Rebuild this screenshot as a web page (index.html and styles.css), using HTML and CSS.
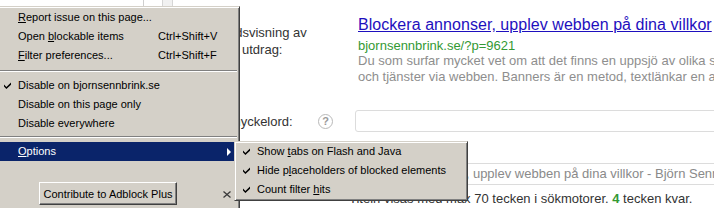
FILE: index.html
```
<!DOCTYPE html>
<html lang="sv">
<head>
<meta charset="utf-8">
<title>Adblock Plus menu</title>
<link rel="stylesheet" href="styles.css">
</head>
<body>
<div class="page">
  <div class="topstrip"><span class="tab-a"></span><span class="tab-b"></span></div>
  <div class="row row-preview">
    <div class="label"><div class="label-text indent-preview">Förhandsvisning av<br>utdrag:</div></div>
    <div class="snippet">
      <a class="snippet-title" href="#">Blockera annonser, upplev webben på dina villkor</a>
      <div class="snippet-url">bjornsennbrink.se/?p=9621</div>
      <div class="snippet-desc">Du som surfar mycket vet om att det finns en uppsjö av olika sajter<br>och tjänster via webben. Banners är en metod, textlänkar en annan</div>
    </div>
  </div>
  <div class="row row-key">
    <div class="label label-flex"><span class="label-text indent-key">Fokusnyckelord:</span><span class="help">?</span></div>
    <div class="field"><div class="input"></div></div>
  </div>
  <div class="row row-title">
    <div class="label label-flex"><span class="label-text">SEO-titel:</span></div>
    <div class="field">
      <div class="input input-text">Blockera annonser, upplev webben på dina villkor - Björn Sennbrink</div>
      <div class="hint">Titeln visas med max 70 tecken i sökmotorer. <b class="count">4</b> tecken kvar.</div>
    </div>
  </div>
</div>

<div class="menu">
  <div class="item"><span class="chk"></span><span><u>R</u>eport issue on this page...</span><span></span></div>
  <div class="item"><span class="chk"></span><span>Open <u>b</u>lockable items</span><span class="key">Ctrl+Shift+V</span></div>
  <div class="item"><span class="chk"></span><span><u>F</u>ilter preferences...</span><span class="key">Ctrl+Shift+F</span></div>
  <div class="sep sep-a"></div>
  <div class="item"><span class="chk"><svg class="tick" viewBox="0 0 7 7" width="7" height="7"><polygon points="0,2.6 2.4,5 7,0.4 7,2.8 2.4,7 0,4.6"/></svg></span><span>Disable on bjornsennbrink.se</span><span></span></div>
  <div class="item"><span class="chk"></span><span>Disable on this page only</span><span></span></div>
  <div class="item"><span class="chk"></span><span>Disable everywhere</span><span></span></div>
  <div class="sep sep-b"></div>
  <div class="item item-active"><span class="chk"></span><span><u>O</u>ptions</span><span class="arrow"></span></div>
  <div class="button-row">
    <button class="btn" type="button">Contribute to Adblock Plus</button>
    <svg class="close" viewBox="0 0 8 7" width="8" height="7"><path d="M0.5,0.5 L7.5,6.5 M7.5,0.5 L0.5,6.5"/></svg>
  </div>
</div>

<div class="submenu">
  <div class="sitem"><span class="schk"><svg class="tick" viewBox="0 0 7 7" width="7" height="7"><polygon points="0,2.6 2.4,5 7,0.4 7,2.8 2.4,7 0,4.6"/></svg></span><span>Show <u>t</u>abs on Flash and Java</span></div>
  <div class="sitem"><span class="schk"><svg class="tick" viewBox="0 0 7 7" width="7" height="7"><polygon points="0,2.6 2.4,5 7,0.4 7,2.8 2.4,7 0,4.6"/></svg></span><span>Hide p<u>l</u>aceholders of blocked elements</span></div>
  <div class="sitem"><span class="schk"><svg class="tick" viewBox="0 0 7 7" width="7" height="7"><polygon points="0,2.6 2.4,5 7,0.4 7,2.8 2.4,7 0,4.6"/></svg></span><span>Count filter <u>h</u>its</span></div>
</div>
</body>
</html>
```

FILE: styles.css
```
html, body {
  margin: 0;
  padding: 0;
}
body {
  width: 714px;
  height: 208px;
  overflow: hidden;
  position: relative;
  background: #ffffff;
  font-family: "Liberation Sans", Arial, sans-serif;
  color: #333;
}

/* ---------- page behind the menu ---------- */
.page {
  font-size: 13px;
}
.topstrip {
  display: flex;
  height: 6px;
}
.tab-a {
  margin-left: 143px;
  width: 18px;
  border-left: 1px solid #cfcfcf;
}
.tab-b {
  width: 9px;
  background: #f1f1f1;
  border-left: 1px solid #d6d6d6;
  border-right: 1px solid #d6d6d6;
}
.row {
  display: flex;
  padding-left: 242px;
}
.label {
  width: 113px;
  flex: none;
  color: #333;
  line-height: 17px;
}
.label-text {
  display: block;
  white-space: nowrap;
}
.indent-preview {
  padding-top: 18px;
  text-indent: -48px;
}
.indent-key {
  margin-left: -44px;
}
.label-flex {
  display: flex;
  align-items: center;
  height: 22px;
}
.help {
  margin-left: auto;
  margin-right: 22px;
  width: 13px;
  height: 13px;
  border: 1px solid #b9b9b9;
  border-radius: 50%;
  color: #9a9a9a;
  font-size: 11px;
  font-weight: bold;
  line-height: 13px;
  text-align: center;
}
.snippet {
  padding-top: 9px;
  padding-left: 3px;
  white-space: nowrap;
}
.snippet-title {
  display: block;
  font-size: 16px;
  letter-spacing: 0.05px;
  line-height: 19px;
  color: #1e0fbe;
  text-decoration: underline;
}
.snippet-url {
  margin-top: 4px;
  line-height: 15px;
  color: #339933;
}
.snippet-desc {
  line-height: 16px;
  color: #8e8e8e;
}
.row-key {
  margin-top: 25px;
}
.row-title {
  margin-top: 31px;
}
.field {
  flex: none;
  width: 430px;
}
.input {
  box-sizing: border-box;
  height: 22px;
  border: 1px solid #dcdcdc;
  border-radius: 3px;
  background: #fff;
}
.input-text {
  padding-left: 2px;
  line-height: 20px;
  color: #8a8a8a;
  white-space: nowrap;
  overflow: hidden;
}
.hint {
  margin-top: 6px;
  margin-left: -6px;
  line-height: 16px;
  color: #333;
  white-space: nowrap;
}
.count {
  color: #339933;
}

/* ---------- classic context menu ---------- */
.menu,
.submenu {
  position: absolute;
  box-sizing: border-box;
  background: #d4d0c8;
  border: 1px solid;
  border-color: #d4d0c8 #404040 #404040 #d4d0c8;
  box-shadow: inset 1px 1px #ffffff, inset -1px -1px #808080;
  font-family: "Liberation Sans", Arial, sans-serif;
  font-size: 11px;
  color: #000;
}
.menu {
  left: -4px;
  top: 6px;
  width: 244px;
  height: 230px;
  padding: 1px 1px;
  z-index: 2;
}
.item {
  display: grid;
  grid-template-columns: 20px 140px 1fr;
  align-items: center;
  height: 19px;
  line-height: 19px;
  white-space: nowrap;
}
.chk {
  display: flex;
  align-items: center;
  padding-left: 6px;
  height: 19px;
}
.tick {
  display: block;
  fill: #000;
}
.key {
  color: #000;
}
.item-active {
  background: #0a246a;
  color: #fff;
}
.arrow {
  justify-self: end;
  margin-right: 7px;
  width: 0;
  height: 0;
  border-left: 4px solid #ffffff;
  border-top: 4px solid transparent;
  border-bottom: 4px solid transparent;
}
.sep {
  height: 0;
  margin-left: 1px;
  margin-right: 1px;
  border-top: 1px solid #808080;
  border-bottom: 1px solid #ffffff;
}
.sep-a {
  margin-top: 5px;
  margin-bottom: 4px;
}
.sep-b {
  margin-top: 3px;
  margin-bottom: 4px;
}
.button-row {
  display: flex;
  align-items: center;
  margin-top: 21px;
  padding-left: 41px;
}
.btn {
  box-sizing: border-box;
  width: 138px;
  height: 23px;
  padding: 0;
  background: #d4d0c8;
  border: 1px solid;
  border-color: #ffffff #404040 #404040 #ffffff;
  box-shadow: inset -1px -1px #808080;
  font-family: "Liberation Sans", Arial, sans-serif;
  font-size: 11px;
  color: #000;
}
.close {
  display: block;
  margin-left: 46px;
  margin-top: 2px;
  stroke: #3a3a3a;
  stroke-width: 1.3;
  fill: none;
}

.submenu {
  left: 234px;
  top: 141px;
  width: 234px;
  height: 60px;
  padding: 0 1px;
  z-index: 3;
}
.sitem {
  display: grid;
  grid-template-columns: 21px 1fr;
  align-items: center;
  height: 19px;
  line-height: 19px;
  white-space: nowrap;
}
.schk {
  display: flex;
  align-items: center;
  padding-left: 7px;
  height: 19px;
}
```
